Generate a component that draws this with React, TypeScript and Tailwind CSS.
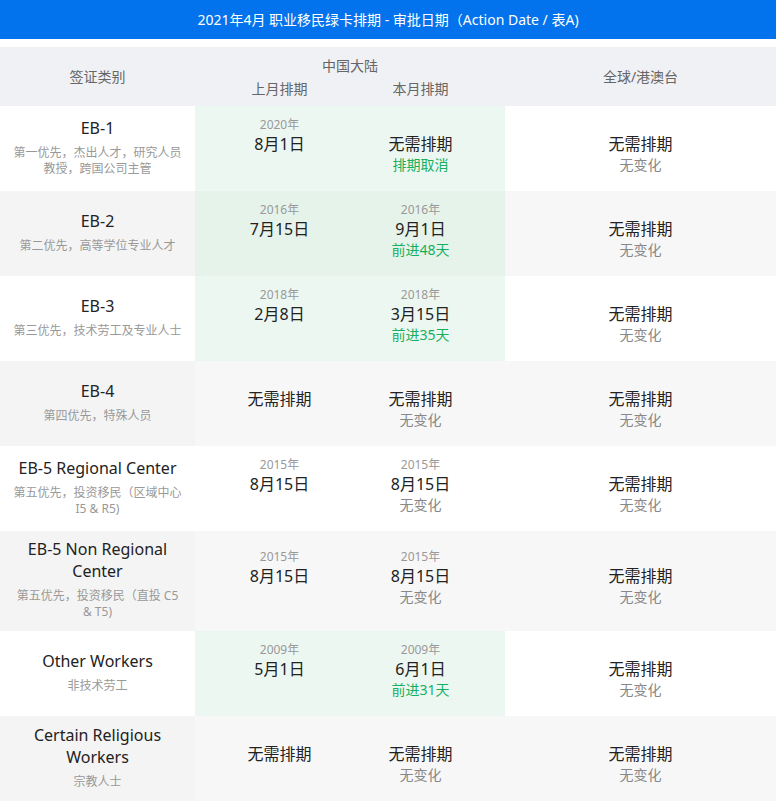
import React from 'react';

type Cell = { year?: string; main: string; status: string; up?: boolean };

interface Row {
  title: string;
  sub: string;
  h: string;
  green: boolean;
  prev: Cell;
  cur: Cell;
  world: Cell;
}

const noChange: Cell = { main: '无需排期', status: '无变化' };

const rows: Row[] = [
  {
    title: 'EB-1',
    sub: '第一优先，杰出人才，研究人员教授，跨国公司主管',
    h: 'h-[85px]',
    green: true,
    prev: { year: '2020年', main: '8月1日', status: '' },
    cur: { main: '无需排期', status: '排期取消', up: true },
    world: noChange,
  },
  {
    title: 'EB-2',
    sub: '第二优先，高等学位专业人才',
    h: 'h-[85px]',
    green: true,
    prev: { year: '2016年', main: '7月15日', status: '' },
    cur: { year: '2016年', main: '9月1日', status: '前进48天', up: true },
    world: noChange,
  },
  {
    title: 'EB-3',
    sub: '第三优先，技术劳工及专业人士',
    h: 'h-[85px]',
    green: true,
    prev: { year: '2018年', main: '2月8日', status: '' },
    cur: { year: '2018年', main: '3月15日', status: '前进35天', up: true },
    world: noChange,
  },
  {
    title: 'EB-4',
    sub: '第四优先，特殊人员',
    h: 'h-[85px]',
    green: false,
    prev: { main: '无需排期', status: '' },
    cur: noChange,
    world: noChange,
  },
  {
    title: 'EB-5 Regional Center',
    sub: '第五优先，投资移民（区域中心 I5 & R5)',
    h: 'h-[85px]',
    green: false,
    prev: { year: '2015年', main: '8月15日', status: '' },
    cur: { year: '2015年', main: '8月15日', status: '无变化' },
    world: noChange,
  },
  {
    title: 'EB-5 Non Regional Center',
    sub: '第五优先，投资移民（直投 C5 & T5)',
    h: 'h-[100px]',
    green: false,
    prev: { year: '2015年', main: '8月15日', status: '' },
    cur: { year: '2015年', main: '8月15日', status: '无变化' },
    world: noChange,
  },
  {
    title: 'Other Workers',
    sub: '非技术劳工',
    h: 'h-[85px]',
    green: true,
    prev: { year: '2009年', main: '5月1日', status: '' },
    cur: { year: '2009年', main: '6月1日', status: '前进31天', up: true },
    world: noChange,
  },
  {
    title: 'Certain Religious Workers',
    sub: '宗教人士',
    h: 'h-[85px]',
    green: false,
    prev: { main: '无需排期', status: '' },
    cur: noChange,
    world: noChange,
  },
];

const DateCell: React.FC<{ cell: Cell }> = ({ cell }) => (
  <div className="flex flex-col items-center justify-center pb-[6px] text-center">
    <div className="h-4 text-xs leading-4 text-[#999]">{cell.year}</div>
    <div className="text-base leading-[22px] text-[#222]">{cell.main}</div>
    <div className={`h-5 text-sm leading-5 ${cell.up ? 'text-[#14b060]' : 'text-[#888]'}`}>{cell.status}</div>
  </div>
);

export default function App() {
  return (
    <div
      className="w-[776px] h-[805px] bg-white"
      style={{ fontFamily: '"Noto Sans", "Noto Sans CJK SC", sans-serif' }}
    >
      <div className="h-[39px] bg-[#0273ec] flex items-center justify-center text-white text-sm">
        2021年4月 职业移民绿卡排期 - 审批日期（Action Date / 表A)
      </div>

      <div className="mt-2 grid grid-cols-[195px_310px_1fr] h-[59px] bg-[#f0f1f4] text-sm text-[#666]">
        <div className="flex items-center justify-center">签证类别</div>
        <div className="flex flex-col items-center justify-center">
          <div className="leading-[23px]">中国大陆</div>
          <div className="grid grid-cols-2 w-full px-[14px] leading-[23px] text-center">
            <span>上月排期</span>
            <span>本月排期</span>
          </div>
        </div>
        <div className="flex items-center justify-center">全球/港澳台</div>
      </div>

      {rows.map((r, i) => {
        const gray = i % 2 === 1;
        const mid = r.green
          ? gray
            ? 'bg-[#e6f3eb]'
            : 'bg-[#edf7f1]'
          : gray
            ? 'bg-[#f7f7f7]'
            : 'bg-white';
        return (
          <div key={r.title} className={`grid grid-cols-[195px_310px_1fr] ${r.h}`}>
            <div
              className={`flex flex-col items-center justify-center px-3 pb-1 text-center ${gray ? 'bg-[#f4f4f4]' : 'bg-white'}`}
            >
              <div className="text-base leading-[22px] text-[#222]">{r.title}</div>
              <div className="mt-[6px] text-xs leading-4 text-[#999]">{r.sub}</div>
            </div>
            <div className={`grid grid-cols-2 px-[14px] ${mid}`}>
              <DateCell cell={r.prev} />
              <DateCell cell={r.cur} />
            </div>
            <div className={`flex items-center justify-center ${gray ? 'bg-[#f7f7f7]' : 'bg-white'}`}>
              <DateCell cell={r.world} />
            </div>
          </div>
        );
      })}
    </div>
  );
}
